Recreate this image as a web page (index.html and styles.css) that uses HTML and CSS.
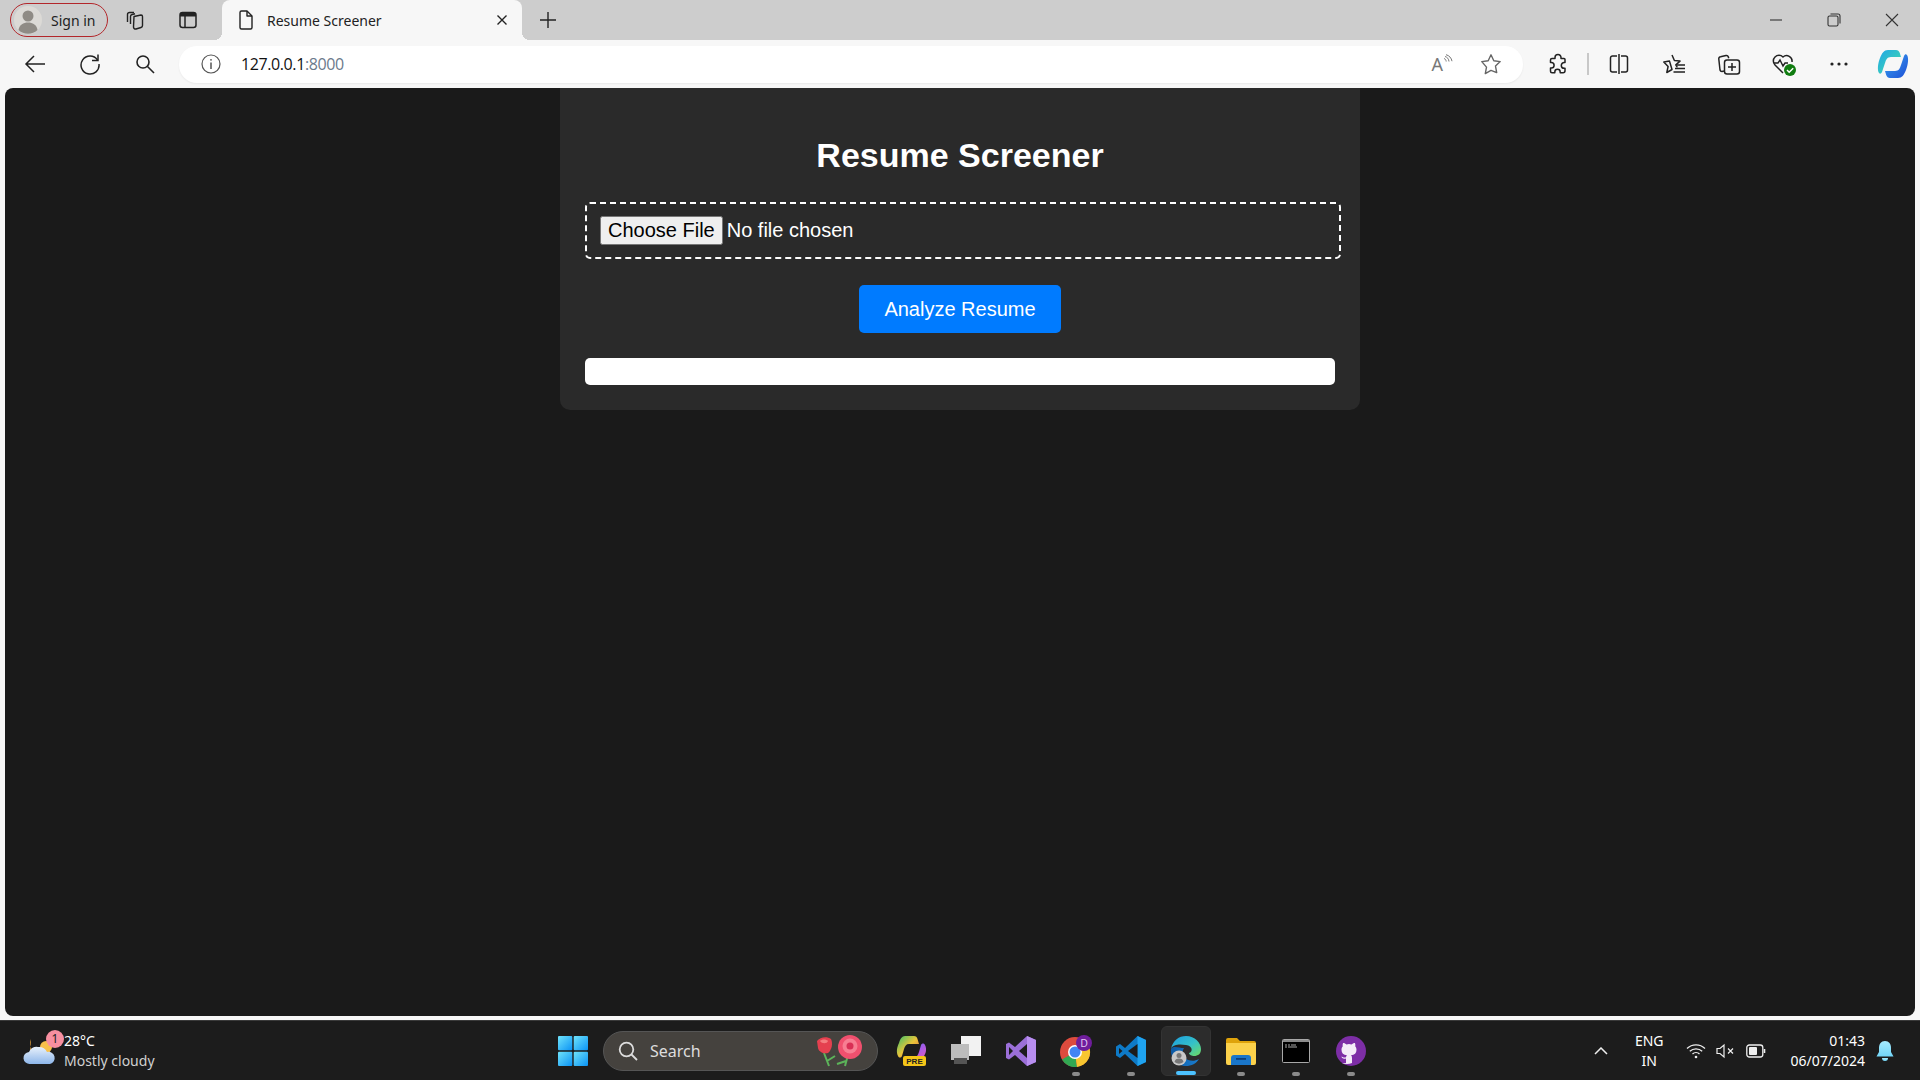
FILE: index.html
```html
<!DOCTYPE html>
<html lang="en">
<head>
    <meta charset="UTF-8">
    <title>Resume Screener</title>
    <link rel="stylesheet" href="styles.css">
</head>
<body>
    <svg class="defs" width="0" height="0">
        <defs>
            <linearGradient id="copA" x1="0" y1="0" x2="1" y2="1"><stop offset="0" stop-color="#1fa6e8"/><stop offset="0.6" stop-color="#37c9c0"/><stop offset="1" stop-color="#a3e29a"/></linearGradient>
            <linearGradient id="copB" x1="0" y1="0" x2="1" y2="1"><stop offset="0" stop-color="#39a3f0"/><stop offset="1" stop-color="#1e4fd6"/></linearGradient>
            <linearGradient id="copC" x1="0" y1="0" x2="1" y2="1"><stop offset="0" stop-color="#36c06a"/><stop offset="0.5" stop-color="#e8c43a"/><stop offset="1" stop-color="#e8603a"/></linearGradient>
            <linearGradient id="copD" x1="0" y1="0" x2="1" y2="1"><stop offset="0" stop-color="#3a7ff0"/><stop offset="0.5" stop-color="#a35be8"/><stop offset="1" stop-color="#e85bb8"/></linearGradient>
            <linearGradient id="winG" x1="0" y1="0" x2="1" y2="1"><stop offset="0" stop-color="#6fe3fb"/><stop offset="1" stop-color="#0a93f5"/></linearGradient>
            <linearGradient id="edgeA" x1="0" y1="0" x2="1" y2="1"><stop offset="0" stop-color="#1b9de2"/><stop offset="0.55" stop-color="#35c1c8"/><stop offset="1" stop-color="#6fdc5f"/></linearGradient>
            <linearGradient id="edgeB" x1="0" y1="0" x2="1" y2="0"><stop offset="0" stop-color="#0c59a4"/><stop offset="1" stop-color="#1b7fd0"/></linearGradient>
            <linearGradient id="cloudG" x1="0" y1="0" x2="0" y2="1"><stop offset="0" stop-color="#e8f1fb"/><stop offset="1" stop-color="#8db6ea"/></linearGradient>
            <linearGradient id="bellG" x1="0" y1="0" x2="0" y2="1"><stop offset="0" stop-color="#a6ecff"/><stop offset="1" stop-color="#72d6f8"/></linearGradient>
        </defs>
    </svg>

    <div class="tabstrip">
        <div class="profile">
            <svg class="avatar" width="28" height="28" viewBox="0 0 28 28"><circle cx="14" cy="14" r="14" fill="#dcdad6"/><circle cx="14" cy="10" r="5.5" fill="#8f8b85"/><path d="M4.5 24c1-5.500 5-7.500 9.500-7.500s8.500 2 9.500 7.500a14 14 0 0 1-19 0z" fill="#8f8b85"/></svg>
            <span>Sign in</span>
        </div>
        <div class="strip-btn">
            <svg width="22" height="22" viewBox="0 0 22 22" fill="none" stroke="#222" stroke-width="1.400" stroke-linejoin="round"><path d="M3.500 13V5.500a2 2 0 0 1 2-2H10"/><path d="M6.500 15V7.500a2 2 0 0 1 1.500-2l3-.8"/><path d="M10 7.500l7-1.500a1.500 1.500 0 0 1 1.500 1.500v9a2 2 0 0 1-1.500 2l-5 1.500a2 2 0 0 1-2.500-2z"/></svg>
        </div>
        <div class="strip-btn">
            <svg width="20" height="20" viewBox="0 0 20 20" fill="none"><rect x="2" y="2.500" width="16" height="15" rx="2.500" stroke="#222" stroke-width="1.500"/><path d="M2 5a2.500 2.500 0 0 1 2.500-2.500h11A2.500 2.500 0 0 1 18 5v1.500H2z" fill="#222"/><path d="M7 6v11.500" stroke="#222" stroke-width="1.500"/></svg>
        </div>
        <div class="tab">
            <svg width="18" height="22" viewBox="0 0 18 22" fill="none" stroke="#222" stroke-width="1.400" stroke-linejoin="round"><path d="M3 3.500a1.500 1.500 0 0 1 1.500-1.500H10l5 5v11.500a1.500 1.500 0 0 1-1.500 1.500h-9A1.500 1.500 0 0 1 3 18.500z"/><path d="M10 2v5h5"/></svg>
            <span class="tab-title">Resume Screener</span>
            <svg width="12" height="12" viewBox="0 0 12 12" stroke="#222" stroke-width="1.400"><path d="M1.500 1.500l9 9M10.500 1.500l-9 9"/></svg>
        </div>
        <div class="new-tab">
            <svg width="18" height="18" viewBox="0 0 18 18" stroke="#222" stroke-width="1.400"><path d="M9 1v16M1 9h16"/></svg>
        </div>
        <div class="win-controls">
            <div class="win-btn"><svg width="14" height="14" viewBox="0 0 14 14" stroke="#333" stroke-width="1.100"><path d="M1 7h12"/></svg></div>
            <div class="win-btn"><svg width="14" height="14" viewBox="0 0 14 14" fill="none" stroke="#333" stroke-width="1.100"><rect x="1" y="3" width="10" height="10" rx="1.500"/><path d="M3.500 1H11a2 2 0 0 1 2 2v7.500"/></svg></div>
            <div class="win-btn"><svg width="14" height="14" viewBox="0 0 14 14" stroke="#333" stroke-width="1.100"><path d="M1 1l12 12M13 1L1 13"/></svg></div>
        </div>
    </div>

    <div class="toolbar">
        <div class="tool-btn"><svg width="22" height="20" viewBox="0 0 22 20" fill="none" stroke="#222" stroke-width="1.500"><path d="M21 10H2M10 2l-8 8 8 8"/></svg></div>
        <div class="tool-btn"><svg width="22" height="22" viewBox="0 0 22 22" fill="none" stroke="#222" stroke-width="1.500"><path d="M18.500 7A9 9 0 1 0 20 11"/><path d="M19 1.500V7.500h-6"/></svg></div>
        <div class="tool-btn"><svg width="20" height="20" viewBox="0 0 20 20" fill="none" stroke="#222" stroke-width="1.600"><circle cx="8" cy="8" r="6"/><path d="M12.500 12.500L19 19"/></svg></div>
        <div class="address">
            <svg width="20" height="20" viewBox="0 0 20 20" fill="none" stroke="#555" stroke-width="1.200"><circle cx="10" cy="10" r="9"/><path d="M10 8.500V15" stroke-width="1.500"/><circle cx="10" cy="5.800" r=".9" fill="#555" stroke="none"/></svg>
            <span class="url">127.0.0.1<span class="port">:8000</span></span>
            <div class="addr-icons">
                <span class="read-aloud"><span class="read-a">A</span><svg width="10" height="12" viewBox="0 0 10 12" fill="none" stroke="#777" stroke-width="1"><path d="M1 4.500c1.500.5 2 1.500 2.200 3M2 2.500c2.500.7 3.700 2.500 4 5M3 .7c3.300.8 5.400 3.300 6 6.500"/></svg></span>
                <svg width="22" height="22" viewBox="0 0 22 22" fill="none" stroke="#666" stroke-width="1.400" stroke-linejoin="round"><path d="M11 1.800l2.800 6 6.400.8-4.700 4.500 1.200 6.500L11 17.400l-5.700 3.200 1.200-6.500L1.800 8.600l6.400-.8z"/></svg>
            </div>
        </div>
        <div class="tool-btn ext"><svg width="22" height="22" viewBox="0 0 22 22" fill="none" stroke="#222" stroke-width="1.500" stroke-linejoin="round"><path d="M8 4.500a3 3 0 0 1 6 0V5.500h3a1 1 0 0 1 1 1v3h-.8a2.900 2.900 0 0 0 0 5.800H18v2.500a2 2 0 0 1-2 2h-2.800v-.8a2.700 2.700 0 0 0-5.400 0v.8H5a1.500 1.500 0 0 1-1.500-1.500V15h.8a2.800 2.800 0 0 0 0-5.600h-.8V7a1.500 1.500 0 0 1 1.500-1.500h3z"/></svg></div>
        <div class="tool-sep"></div>
        <div class="tool-btn"><svg width="22" height="22" viewBox="0 0 22 22" fill="none" stroke="#222" stroke-width="1.500"><path d="M9 3H4.500A2 2 0 0 0 2.500 5v12a2 2 0 0 0 2 2H9M13 3h4.500a2 2 0 0 1 2 2v12a2 2 0 0 1-2 2H13M11 1v20"/></svg></div>
        <div class="tool-btn"><svg width="24" height="22" viewBox="0 0 24 22" fill="none" stroke="#222" stroke-width="1.500" stroke-linejoin="round"><path d="M10 2l2.400 5.500 5.600.6-4.200 3.800 1.200 2-.3 0M13.800 11.900M10 16.500l-5.200 3 1.300-6L1.800 9l5.700-.9z"/><path d="M15 12h8M13 15.500h10M11.500 19h11.500"/></svg></div>
        <div class="tool-btn"><svg width="24" height="24" viewBox="0 0 24 24" fill="none" stroke="#222" stroke-width="1.500" stroke-linejoin="round"><path d="M7 19l-2 .5a2 2 0 0 1-2-1.500L1.800 7a2 2 0 0 1 1.700-2.300L9 3.500a2 2 0 0 1 2.300 1.300l.4 1.500"/><rect x="7.500" y="8" width="15" height="14" rx="2.500"/><path d="M15 11v8M11 15h8"/></svg></div>
        <div class="tool-btn"><svg width="26" height="26" viewBox="0 0 26 26" fill="none"><path d="M12 22L4 14a5.500 5.500 0 0 1 8-8 5.500 5.500 0 0 1 9 5" stroke="#222" stroke-width="1.500"/><path d="M3 12h4l2-3 3 6 2-3h3" stroke="#222" stroke-width="1.400"/><circle cx="19" cy="19" r="6" fill="#107c10"/><path d="M16 19l2.200 2.200 4-4" stroke="#fff" stroke-width="1.500"/></svg></div>
        <div class="tool-btn"><svg width="20" height="6" viewBox="0 0 20 6" fill="#222"><circle cx="3" cy="3" r="1.600"/><circle cx="10" cy="3" r="1.600"/><circle cx="17" cy="3" r="1.600"/></svg></div>
        <div class="tool-btn copilot"><svg width="32" height="32" viewBox="0 0 32 32"><path d="M11 2h8c2 0 3 1 3.800 3L24 9H14c-4 0-5 3-6 6l-3 9c-1 2-2 2-3 1-2-3-1-10 1-15 2-5 4-8 8-8z" fill="url(#copA)"/><path d="M21 30h-8c-2 0-3-1-3.800-3L8 23h10c4 0 5-3 6-6l3-9c1-2 2-2 3-1 2 3 1 10-1 15-2 5-4 8-8 8z" fill="url(#copB)"/></svg></div>
    </div>

    <div class="page">
        <div class="container">
            <h1>Resume Screener</h1>
            <input type="file" class="file-input">
            <button class="analyze">Analyze Resume</button>
            <div class="result"></div>
        </div>
    </div>

    <div class="taskbar">
        <div class="weather">
            <div class="weather-icon">
                <svg width="36" height="40" viewBox="0 0 36 40"><path d="M9 8a11 11 0 0 0 13 15H8z" fill="#f2a93b"/><ellipse cx="24" cy="16" rx="6" ry="6" fill="#f7c04a"/><path d="M8 33a6 6 0 0 1-1-12 8 8 0 0 1 9-5 9 9 0 0 1 9 5 6 6 0 0 1 3 12z" fill="url(#cloudG)"/></svg>
                <span class="badge">1</span>
            </div>
            <div class="weather-text">
                <span class="temp">28°C</span>
                <span class="sky">Mostly cloudy</span>
            </div>
        </div>
        <div class="task-center">
            <div class="slot">
                <svg width="30" height="30" viewBox="0 0 30 30" fill="url(#winG)"><rect x="0" y="0" width="14.300" height="14.300" rx="1"/><rect x="15.700" y="0" width="14.300" height="14.300" rx="1"/><rect x="0" y="15.700" width="14.300" height="14.300" rx="1"/><rect x="15.700" y="15.700" width="14.300" height="14.300" rx="1"/></svg>
            </div>
            <div class="search">
                <svg width="20" height="20" viewBox="0 0 20 20" fill="none" stroke="#ddd" stroke-width="1.800"><circle cx="8.500" cy="8.500" r="6.800"/><path d="M13.500 13.500L19 19"/></svg>
                <span>Search</span>
                <svg class="roses" width="50" height="32" viewBox="0 0 50 32"><path d="M10 18l5 13M13 26l8-5M34 20l-3 11M32 26l-9 3" stroke="#5cb45a" stroke-width="2" fill="none"/><path d="M3 6c3-4 10-5 14-2 2 4 1 11-3 14-5 1-9-1-10-5z" fill="#e5404f"/><path d="M6 6c2-2 6-2 8 0-1 3-6 3-8 0z" fill="#f47d7f"/><circle cx="36" cy="12" r="12" fill="#f0506e"/><circle cx="36" cy="11" r="7.500" fill="#f77e92"/><circle cx="36" cy="11" r="3.500" fill="#d92f55"/></svg>
            </div>
            <div class="slot">
                <svg width="30" height="30" viewBox="0 0 30 30"><path d="M9 0h9c2 0 3 1 3.500 3L23 8H13c-3 0-4 2-5 5l-2 7c-1 2-3 2-4 0-2-4-1-9 1-13 1-4 3-7 6-7z" fill="url(#copC)"/><path d="M20 24h-8L10 21h8c3 0 4-2 5-5l2-7c1-2 3-2 4 0 2 4 1 8-1 11-2 3-4 4-8 4z" fill="url(#copD)"/><rect x="7" y="20" width="23" height="10" rx="2" fill="#f5c518"/><text x="18.500" y="28" class="pre-text">PRE</text></svg>
            </div>
            <div class="slot">
                <svg width="30" height="30" viewBox="0 0 30 30"><rect x="10" y="0" width="20" height="20" fill="#f2f2f2"/><rect x="0" y="8" width="18" height="16" fill="#bdbdbd"/><rect x="3" y="22" width="13" height="6" fill="#555"/></svg>
            </div>
            <div class="slot">
                <svg width="30" height="30" viewBox="0 0 30 30"><path d="M21 0l9 4v22l-9 4-12-11-6 4.500-3-1.500V8l3-1.500L9 11z" fill="#9b6fd8"/><path d="M21 0l9 4v22l-9 4z" fill="#b88ef0"/><path d="M21 8v14l-8-7z" fill="#1c1c1c"/><path d="M3 11l4 4-4 4z" fill="#1c1c1c"/></svg>
            </div>
            <div class="slot running">
                <svg width="32" height="32" viewBox="0 0 32 32"><circle cx="15" cy="17" r="15" fill="#dd4b3e"/><path d="M15 17L2 24.500A15 15 0 0 0 17 32z" fill="#31a853"/><path d="M15 17l2 15A15 15 0 0 0 28 9.500z" fill="#f8c630"/><circle cx="15" cy="17" r="7" fill="#fff"/><circle cx="15" cy="17" r="5.500" fill="#4285f4"/><circle cx="24" cy="8" r="8" fill="#6f1d9c"/><text x="24" y="11.500" class="d-text">D</text></svg>
            </div>
            <div class="slot running">
                <svg width="30" height="30" viewBox="0 0 30 30"><path d="M21.500 0L30 4v22l-8.500 4L9 18l-5 4-4-2.500V10.500L4 8l5 4z" fill="#0e7ac7"/><path d="M21.500 0L30 4v22l-8.500 4z" fill="#1fa3f0"/><path d="M21.500 8v14L12 15z" fill="#1c1c1c"/><path d="M3 12l3.500 3L3 18z" fill="#1c1c1c"/></svg>
            </div>
            <div class="slot active">
                <svg width="32" height="32" viewBox="0 0 32 32"><path d="M1 14C3 5 9 1 16 1c9 0 15 7 15 13 0 5-3 7-7 7-2 0-5-1-5-3 4-1 4-7-3-8C10 9 3 9 1 14z" fill="url(#edgeA)"/><path d="M1 14c-1 8 5 16 13 17 7 .5 12-2 15-7-5 3-11 2-14-1-3-3-3-7-1-10-5 0-11-3-13 1z" fill="url(#edgeB)"/><circle cx="9" cy="23" r="7.500" fill="#c8c8c8"/><circle cx="9" cy="20.500" r="2.500" fill="#777"/><path d="M4.500 27c.5-2.500 2-3.500 4.500-3.500s4 1 4.500 3.500a7.500 7.500 0 0 1-9 0z" fill="#777"/></svg>
            </div>
            <div class="slot running">
                <svg width="30" height="28" viewBox="0 0 30 28"><path d="M0 3a2 2 0 0 1 2-2h9l3 3h14a2 2 0 0 1 2 2v3H0z" fill="#dfa30b"/><path d="M0 6h30v20a2 2 0 0 1-2 2H2a2 2 0 0 1-2-2z" fill="#fbd14b"/><path d="M5 28V21a3 3 0 0 1 3-3h14a3 3 0 0 1 3 3v7z" fill="#1a76c9"/><rect x="10" y="21" width="10" height="1.800" fill="#0b3f7a"/></svg>
            </div>
            <div class="slot running">
                <svg width="28" height="24" viewBox="0 0 28 24"><rect x=".5" y=".5" width="27" height="23" rx="1" fill="#000" stroke="#a8a8a8"/><rect x="1" y="1" width="26" height="2" fill="#8a8a8a"/><path d="M3 6h2M6 6h2M9 6h5M3 8h2M6 8h9" stroke="#aaa" stroke-width="1"/></svg>
            </div>
            <div class="slot running">
                <svg width="30" height="30" viewBox="0 0 30 30"><circle cx="15" cy="15" r="15" fill="#7d2ea6"/><path d="M10 27v-4.500c-3 .8-4-.4-4.600-2 1 .2 2 1.600 4.600.8.100-1 .5-1.600 1-2-3.600-.4-5.500-2-5.500-5.500 0-1.500.5-2.600 1.300-3.500-.2-.8-.3-2 .3-3.300 1.300 0 2.500.7 3.400 1.400a11 11 0 0 1 5 0c.9-.7 2.100-1.400 3.400-1.400.6 1.300.5 2.500.3 3.300.8.900 1.300 2 1.300 3.500 0 3.500-1.900 5.100-5.500 5.500.7.600 1 1.500 1 2.600V27a13 13 0 0 1-10 0z" fill="#f4ecf8"/></svg>
            </div>
        </div>
        <div class="tray">
            <svg class="chevron" width="14" height="8" viewBox="0 0 14 8" fill="none" stroke="#eee" stroke-width="1.500"><path d="M1 7l6-6 6 6"/></svg>
            <div class="lang"><span>ENG</span><span>IN</span></div>
            <div class="tray-icons">
                <svg width="20" height="16" viewBox="0 0 20 16" fill="none" stroke="#eee" stroke-width="1.300"><path d="M1 5.500a13 13 0 0 1 18 0M3.800 8.300a9 9 0 0 1 12.400 0M6.500 11a5 5 0 0 1 7 0"/><circle cx="10" cy="14" r="1.300" fill="#eee" stroke="none"/></svg>
                <svg width="20" height="16" viewBox="0 0 20 16" fill="none" stroke="#eee" stroke-width="1.200"><path d="M1 5.500h3L8 2v12l-4-3.500H1z"/><path d="M12 5.500l5 5M17 5.500l-5 5"/></svg>
                <svg width="20" height="14" viewBox="0 0 20 14" fill="none"><rect x=".8" y="1" width="16" height="12" rx="2.500" stroke="#eee" stroke-width="1.300"/><rect x="3" y="3" width="8" height="8" rx="1" fill="#eee"/><path d="M18.500 5v4" stroke="#eee" stroke-width="1.600"/></svg>
            </div>
            <div class="clock"><span>01:43</span><span>06/07/2024</span></div>
            <svg width="18" height="20" viewBox="0 0 18 20" fill="url(#bellG)"><path d="M9 0c4 0 6 3 6 7v4l2.500 4.500H.5L3 11V7c0-4 2-7 6-7z"/><path d="M6 17h6a3 3 0 0 1-6 0z"/></svg>
        </div>
    </div>
</body>
</html>
```

FILE: styles.css
```css
* { box-sizing: border-box; }
html, body { height: 100%; }
body {
    margin: 0;
    height: 1080px;
    overflow: hidden;
    display: flex;
    flex-direction: column;
    background: #f7f7f7;
    font-family: 'Noto Sans', 'Open Sans', sans-serif;
}
.defs { display: block; height: 0; }
svg { display: block; flex: none; }

/* tab strip */
.tabstrip {
    height: 40px;
    flex: none;
    display: flex;
    align-items: center;
    background: #cdcdcd;
    padding-left: 10px;
}
.profile {
    width: 98px;
    height: 34px;
    display: flex;
    align-items: center;
    gap: 9px;
    padding-left: 3px;
    border: 1.5px solid #b3272b;
    border-radius: 17px;
    font-size: 14px;
    color: #222;
}
.strip-btn {
    width: 53px;
    display: flex;
    justify-content: center;
}
.strip-btn:first-of-type { margin-left: 6px; }
.tab {
    position: relative;
    width: 300px;
    height: 40px;
    margin-left: 8px;
    display: flex;
    align-items: center;
    gap: 12px;
    padding: 0 14px 0 15px;
    background: #f7f7f7;
    border-radius: 8px 8px 0 0;
    font-size: 14px;
    color: #222;
}
.tab::before, .tab::after {
    content: "";
    position: absolute;
    bottom: 0;
    width: 8px;
    height: 8px;
}
.tab::before { left: -8px; background: radial-gradient(circle at 0 0, transparent 8px, #f7f7f7 8px); }
.tab::after { right: -8px; background: radial-gradient(circle at 100% 0, transparent 8px, #f7f7f7 8px); }
.tab-title { flex: 1; }
.new-tab { margin-left: 17px; }
.win-controls {
    margin-left: auto;
    display: flex;
    padding-right: 0;
}
.win-btn {
    width: 58px;
    display: flex;
    justify-content: center;
}
.win-btn:last-child { width: 57px; }

/* toolbar */
.toolbar {
    height: 48px;
    flex: none;
    display: flex;
    align-items: center;
    padding-left: 7px;
    background: #f7f7f7;
}
.tool-btn {
    width: 55px;
    display: flex;
    justify-content: center;
}
.address {
    width: 1344px;
    height: 37px;
    margin: 0 8px 0 7px;
    display: flex;
    align-items: center;
    padding-left: 22px;
    background: #fff;
    border-radius: 18px;
    box-shadow: 0 1px 2px rgba(0,0,0,0.06);
}
.url {
    margin-left: 20px;
    font-family: 'Open Sans', sans-serif;
    font-size: 16px;
    letter-spacing: -0.4px;
    color: #111;
}
.port { color: #6b7a8c; }
.addr-icons {
    margin-left: auto;
    display: flex;
    align-items: center;
    gap: 27px;
    padding-right: 21px;
}
.read-aloud {
    display: flex;
    align-items: flex-start;
    color: #777;
    font-size: 18px;
    line-height: 20px;
}
.tool-btn.ext { width: 54px; }
.tool-sep {
    width: 2px;
    height: 22px;
    margin: 0 2px 0 2px;
    background: #c8c8c8;
}
.tool-btn.copilot { width: 54px; }

/* page */
.page {
    flex: 1;
    min-height: 0;
    margin: 0 5px 4px;
    background: #1a1a1a;
    border-radius: 8px;
    overflow: hidden;
}
.container {
    width: 800px;
    margin: 0 auto;
    padding: 25px;
    background: #2a2a2a;
    border-radius: 0 0 10px 10px;
    font-family: 'Liberation Sans', Arial, sans-serif;
    color: #fff;
}
h1 {
    margin: 23px 0 27px;
    font-size: 34px;
    line-height: 39px;
    font-weight: bold;
    text-align: center;
}
.file-input {
    display: block;
    width: 756px;
    padding: 12px 13px;
    border: 2px dashed #fff;
    border-radius: 5px;
    font-family: inherit;
    font-size: 20px;
    color: #fff;
}
.analyze {
    display: block;
    height: 48px;
    margin: 26px auto 25px;
    padding: 0 25px;
    border: none;
    border-radius: 5px;
    background: #007bff;
    color: #fff;
    font-family: inherit;
    font-size: 20px;
}
.result {
    height: 27px;
    background: #fff;
    border-radius: 5px;
}

/* taskbar */
.taskbar {
    height: 60px;
    flex: none;
    display: flex;
    align-items: center;
    position: relative;
    background: #1c1c1c;
    border-top: 1px solid #3a3a3a;
    color: #fff;
    font-family: 'Noto Sans', 'Open Sans', sans-serif;
}
.weather {
    display: flex;
    align-items: center;
    gap: 6px;
    padding-left: 22px;
    font-size: 14px;
    line-height: 20px;
}
.weather-icon { position: relative; }
.badge {
    position: absolute;
    top: -1px;
    right: -6px;
    width: 18px;
    height: 18px;
    border-radius: 50%;
    background: #f78fa0;
    color: #222;
    font-size: 12px;
    line-height: 18px;
    text-align: center;
}
.weather-text { display: flex; flex-direction: column; }
.sky { color: #d0d0d0; }
.task-center {
    position: absolute;
    left: 545px;
    top: 0;
    height: 59px;
    display: flex;
    align-items: center;
}
.slot {
    position: relative;
    width: 55px;
    height: 50px;
    display: flex;
    align-items: center;
    justify-content: center;
    border-radius: 6px;
}
.slot.running::after, .slot.active::after {
    content: "";
    position: absolute;
    bottom: 0;
    left: 50%;
    width: 8px;
    height: 4px;
    margin-left: -4px;
    border-radius: 2px;
    background: #8a8a8a;
}
.slot.active { background: #2c2c2c; width: 50px; margin: 0 2.500px; border: 1px solid #333; }
.slot.active::after { width: 20px; margin-left: -10px; background: #4cc2ff; }
.search {
    width: 275px;
    height: 40px;
    margin: 0 5px 0 3px;
    display: flex;
    align-items: center;
    gap: 12px;
    padding: 0 13px 0 14px;
    background: #45423e;
    border: 1px solid #555;
    border-radius: 20px;
    color: #ddd;
    font-size: 16px;
}
.roses { margin-left: auto; }
.pre-text {
    font-family: 'Liberation Sans', sans-serif;
    font-size: 8px;
    font-weight: bold;
    text-anchor: middle;
    fill: #222;
}
.d-text {
    font-family: 'Liberation Sans', sans-serif;
    font-size: 10px;
    text-anchor: middle;
    fill: #e3c8f2;
}
.tray {
    margin-left: auto;
    display: flex;
    align-items: center;
    padding-right: 26px;
    font-size: 14px;
    line-height: 20px;
}
.chevron { margin-right: 27px; }
.lang { display: flex; flex-direction: column; align-items: center; margin-right: 22px; }
.tray-icons { display: flex; align-items: center; gap: 10px; margin-right: 25px; }
.clock { display: flex; flex-direction: column; align-items: flex-end; margin-right: 11px; }
```
